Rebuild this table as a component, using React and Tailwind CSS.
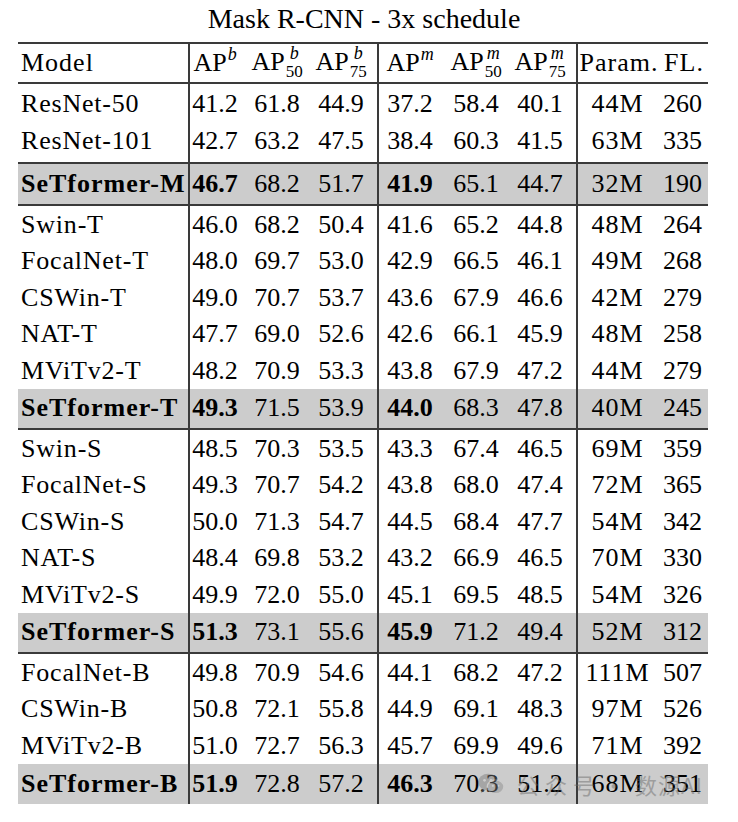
import React from 'react';

const groups = [
    [
        ['ResNet-50', '41.2', '61.8', '44.9', '37.2', '58.4', '40.1', '44M', '260'],
        ['ResNet-101', '42.7', '63.2', '47.5', '38.4', '60.3', '41.5', '63M', '335'],
        ['SeTformer-M', '46.7', '68.2', '51.7', '41.9', '65.1', '44.7', '32M', '190'],
    ],
    [
        ['Swin-T', '46.0', '68.2', '50.4', '41.6', '65.2', '44.8', '48M', '264'],
        ['FocalNet-T', '48.0', '69.7', '53.0', '42.9', '66.5', '46.1', '49M', '268'],
        ['CSWin-T', '49.0', '70.7', '53.7', '43.6', '67.9', '46.6', '42M', '279'],
        ['NAT-T', '47.7', '69.0', '52.6', '42.6', '66.1', '45.9', '48M', '258'],
        ['MViTv2-T', '48.2', '70.9', '53.3', '43.8', '67.9', '47.2', '44M', '279'],
        ['SeTformer-T', '49.3', '71.5', '53.9', '44.0', '68.3', '47.8', '40M', '245'],
    ],
    [
        ['Swin-S', '48.5', '70.3', '53.5', '43.3', '67.4', '46.5', '69M', '359'],
        ['FocalNet-S', '49.3', '70.7', '54.2', '43.8', '68.0', '47.4', '72M', '365'],
        ['CSWin-S', '50.0', '71.3', '54.7', '44.5', '68.4', '47.7', '54M', '342'],
        ['NAT-S', '48.4', '69.8', '53.2', '43.2', '66.9', '46.5', '70M', '330'],
        ['MViTv2-S', '49.9', '72.0', '55.0', '45.1', '69.5', '48.5', '54M', '326'],
        ['SeTformer-S', '51.3', '73.1', '55.6', '45.9', '71.2', '49.4', '52M', '312'],
    ],
    [
        ['FocalNet-B', '49.8', '70.9', '54.6', '44.1', '68.2', '47.2', '111M', '507'],
        ['CSWin-B', '50.8', '72.1', '55.8', '44.9', '69.1', '48.3', '97M', '526'],
        ['MViTv2-B', '51.0', '72.7', '56.3', '45.7', '69.9', '49.6', '71M', '392'],
        ['SeTformer-B', '51.9', '72.8', '57.2', '46.3', '70.3', '51.2', '68M', '351'],
    ],
];

// AP with a LaTeX-like stacked sup/sub
const AP = ({ sup, sub }) => (
    <span className="inline-flex items-start">
        <span>AP</span>
        <span className="flex flex-col leading-none ml-[1px]">
            <span className="italic text-[18px] -mt-[3px]">{sup}</span>
            {sub && <span className="text-[17px] mt-[1px]">{sub}</span>}
        </span>
    </span>
);

const Cols = ({ cells, widths, bold = [], wide = [] }) => (
    <>
        {cells.map((c, i) => (
            <div
                key={i}
                className={`${widths[i]} text-center whitespace-nowrap ${bold.includes(i) ? 'font-bold' : ''} ${wide.includes(i) ? 'tracking-[1px]' : ''}`}
            >
                {c}
            </div>
        ))}
    </>
);

const boxW = ['w-[50px]', 'w-[74px]', 'w-[54px]'];
const maskW = ['w-[62px]', 'w-[70px]', 'w-[58px]'];
const parW = ['w-[79px]', 'w-[51px]'];

// empty strip that keeps the vertical rules running
const Gap = ({ h }) => (
    <div className={`flex ${h}`}>
        <div className="w-[170px]" />
        <div className="w-[189px] border-l-2 border-[#3a3a3a]" />
        <div className="w-[199px] border-l-2 border-[#3a3a3a]" />
        <div className="w-[132px] border-l-2 border-[#3a3a3a]" />
    </div>
);

const Row = ({ r, shaded, topLine, bottomLine }) => {
    let h = 'h-[36.4px]';
    if (shaded) h = topLine && bottomLine ? 'h-[44px]' : bottomLine ? 'h-[41px]' : 'h-[40px]';
    return (
        <div
            className={`flex items-stretch ${h} ${shaded ? 'bg-[#cccccc]' : ''} ${topLine ? 'border-t-2 border-[#3a3a3a]' : ''} ${bottomLine ? 'border-b-2 border-[#3a3a3a]' : ''}`}
        >
            <div className={`w-[170px] pl-[3px] flex items-center whitespace-nowrap ${shaded ? 'font-bold tracking-[1px]' : 'tracking-[0.8px]'}`}>
                {r[0]}
            </div>
            <div className="w-[189px] border-l-2 border-[#3a3a3a] flex items-center">
                <Cols cells={r.slice(1, 4)} widths={boxW} bold={shaded ? [0] : []} />
            </div>
            <div className="w-[199px] border-l-2 border-[#3a3a3a] flex items-center">
                <Cols cells={r.slice(4, 7)} widths={maskW} bold={shaded ? [0] : []} />
            </div>
            <div className="w-[132px] border-l-2 border-[#3a3a3a] flex items-center">
                <Cols cells={r.slice(7, 9)} widths={parW} wide={[0]} />
            </div>
        </div>
    );
};

const WeChatMark = () => (
    <svg width="28" height="24" viewBox="0 0 30 26">
        <ellipse cx="12" cy="11" rx="11" ry="9" fill="#777777" />
        <path d="M5 18 L4 23 L10 19 Z" fill="#777777" />
        <ellipse cx="20" cy="16" rx="9" ry="7.5" fill="#888888" stroke="#cccccc" strokeWidth="1.5" />
        <circle cx="8" cy="9" r="1.5" fill="#cccccc" />
        <circle cx="15" cy="9" r="1.5" fill="#cccccc" />
        <circle cx="17" cy="15" r="1.2" fill="#cccccc" />
        <circle cx="23" cy="15" r="1.2" fill="#cccccc" />
    </svg>
);

export default function App() {
    return (
        <div className="w-[738px] h-[822px] bg-white text-black text-[26px] leading-[1.15] font-['Liberation_Serif',serif]">
            {/* Title */}
            <div className="h-[42px] pt-[2px] pr-[10px] text-center text-[28px] leading-[34px]">
                Mask R-CNN - 3x schedule
            </div>

            <div className="relative ml-[18px] w-[690px]">
                {/* Header */}
                <div className="flex items-stretch h-[42px] border-t-2 border-b-2 border-[#3a3a3a]">
                    <div className="w-[170px] pl-[3px] flex items-center tracking-[1px]">Model</div>
                    <div className="w-[189px] border-l-2 border-[#3a3a3a] flex items-center">
                        <Cols cells={[<AP sup="b" />, <AP sup="b" sub="50" />, <AP sup="b" sub="75" />]} widths={boxW} />
                    </div>
                    <div className="w-[199px] border-l-2 border-[#3a3a3a] flex items-center">
                        <Cols cells={[<AP sup="m" />, <AP sup="m" sub="50" />, <AP sup="m" sub="75" />]} widths={maskW} />
                    </div>
                    <div className="w-[132px] border-l-2 border-[#3a3a3a] flex items-center">
                        <Cols cells={['Param.', 'FL.']} widths={['w-[82px]', 'w-[48px]']} wide={[0, 1]} />
                    </div>
                </div>

                {groups.map((g, gi) => (
                    <div key={gi} className="flex flex-col">
                        <Gap h={gi === 0 ? 'h-[2px]' : 'h-[1px]'} />
                        {g.map((r, ri) => {
                            const shaded = ri === g.length - 1;
                            return (
                                <React.Fragment key={ri}>
                                    {shaded && gi === 0 && <Gap h="h-[3px]" />}
                                    <Row
                                        r={r}
                                        shaded={shaded}
                                        topLine={shaded && gi === 0}
                                        bottomLine={shaded && gi < groups.length - 1}
                                    />
                                </React.Fragment>
                            );
                        })}
                    </div>
                ))}

                {/* Watermark, semi-transparent over the last row */}
                <div className="absolute left-[459px] bottom-[8px] flex items-center whitespace-nowrap text-[#666666] opacity-45 text-[22px] leading-none pointer-events-none font-['Noto_Sans_CJK_SC',sans-serif]">
                    <WeChatMark />
                    <span className="ml-[12px] tracking-[6px]">公众号</span>
                    <span className="ml-[2px]">·</span>
                    <span className="ml-[10px] tracking-[1px]">数源AI</span>
                </div>
            </div>
        </div>
    );
}
